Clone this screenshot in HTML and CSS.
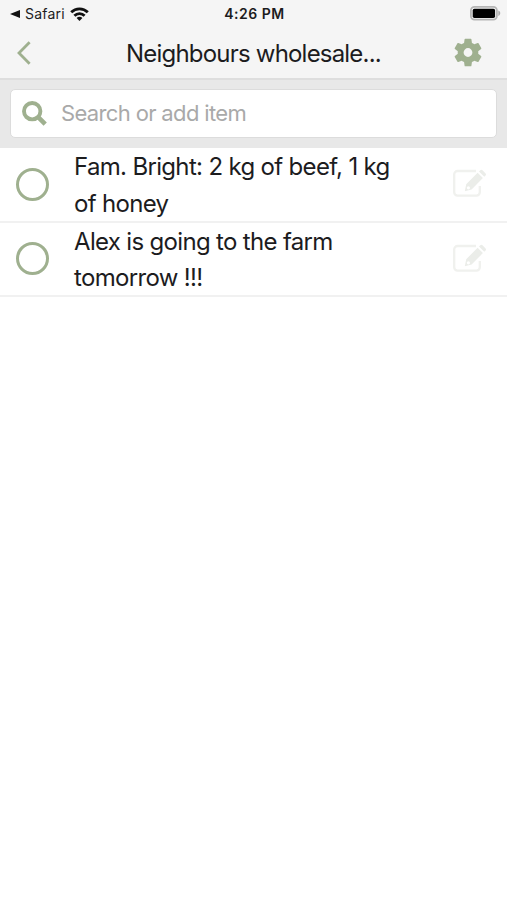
FILE: index.html
```html
<!DOCTYPE html>
<html lang="en">
<head>
<meta charset="UTF-8">
<meta name="viewport" content="width=device-width, initial-scale=1">
<title>Neighbours wholesale</title>
<link rel="stylesheet" href="styles.css">
</head>

<body>

<header class="header">
    <div class="statusbar">
        <div class="status-left">
            <svg class="back-app" viewBox="0 0 10 8"><path d="M0 4 10 0v8z" fill="#111"/></svg>
            <span class="app-name">Safari</span>
            <svg class="wifi" viewBox="0 0 19 14" fill="none" stroke="#111" stroke-width="2.8">
                <path d="M1.2 5.2a11.8 11.8 0 0 1 16.6 0"/>
                <path d="M4.4 8.8a7.2 7.2 0 0 1 10.2 0"/>
                <path d="M9.5 13.9 6.6 11a4 4 0 0 1 5.8 0z" fill="#111" stroke="none"/>
            </svg>
        </div>
        <div class="time">4:26 PM</div>
        <svg class="battery" viewBox="0 0 31 15">
            <rect x=".9" y=".9" width="26" height="12.8" rx="3.6" fill="#f5f5f5" stroke="#b5b5b5" stroke-width="1.8"/>
            <rect x="2.7" y="2.7" width="22.4" height="9.2" rx="1.7" fill="#000"/>
            <path d="M28.3 4.6c2.600.8 2.600 4.600 0 5.400z" fill="#aaa"/>
        </svg>
    </div>

    <div class="navbar">
        <button class="back" aria-label="Back">
            <svg viewBox="0 0 14 24"><path d="M12.6 1.2 2 12l10.6 10.8" fill="none" stroke="#9fb08f" stroke-width="2.8"/></svg>
        </button>
        <h1>Neighbours wholesale...</h1>
        <button class="settings" aria-label="Settings">
            <svg viewBox="1.8 1.8 20.4 20.4"><path fill="#9fb08f" d="M19.43 12.98c.04-.32.07-.64.07-.98s-.03-.66-.07-.98l2.11-1.65c.19-.15.24-.42.12-.64l-2-3.46c-.12-.22-.39-.3-.61-.22l-2.49 1c-.52-.4-1.08-.73-1.69-.98l-.38-2.65A.49.49 0 0 0 14 2h-4c-.25 0-.46.18-.49.42l-.38 2.65c-.61.25-1.17.59-1.69.98l-2.49-1c-.23-.09-.49 0-.61.22l-2 3.46c-.13.22-.07.49.12.64l2.11 1.65c-.04.32-.07.65-.07.98s.03.66.07.98l-2.11 1.65c-.19.15-.24.42-.12.64l2 3.46c.12.22.39.3.61.22l2.49-1c.52.4 1.08.73 1.69.98l.38 2.65c.03.24.24.42.49.42h4c.25 0 .46-.18.49-.42l.38-2.65c.61-.25 1.17-.59 1.69-.98l2.49 1c.23.09.49 0 .61-.22l2-3.46c.12-.22.07-.49-.12-.64zM12 15.2a3.2 3.2 0 1 1 0-6.4 3.2 3.2 0 0 1 0 6.4z"/></svg>
        </button>
    </div>
</header>

<div class="searchbar">
    <label class="searchbox">
        <svg viewBox="0 0 25 25" fill="none" stroke="#9fb08f">
            <circle cx="10.2" cy="10.2" r="8.2" stroke-width="3.9"/>
            <path d="m16.2 16.2 7 7" stroke-width="4.6"/>
        </svg>
        <input type="text" placeholder="Search or add item">
    </label>
</div>

<ul class="list">
    <li>
        <span class="check"></span>
        <p>Fam. Bright: 2 kg of beef, 1 kg of honey</p>
        <svg class="edit" viewBox="0 0 34 28">
            <path d="M23 2H4.5A3.3 3.3 0 0 0 1.2 5.3v18a3.3 3.3 0 0 0 3.3 3.3h19a3.3 3.3 0 0 0 3.3-3.3V17" fill="none" stroke="#f0f1ee" stroke-width="2.3"/>
            <path d="M24.6 3.8 29.9 9.100 18.600 20.400 11.800 22.300 13.200 15.200zM26 2.500l1.300-1.200q1.100-.9 2.200 0l3.100 3.100q.9 1.100 0 2.200l-1.300 1.200z" fill="#ebede9"/>
            <circle cx="15.4" cy="18.8" r="1.6" fill="#fff"/>
        </svg>
    </li>
    <li>
        <span class="check"></span>
        <p>Alex is going to the farm tomorrow !!!</p>
        <svg class="edit" viewBox="0 0 34 28">
            <path d="M23 2H4.5A3.3 3.3 0 0 0 1.2 5.3v18a3.3 3.3 0 0 0 3.3 3.3h19a3.3 3.3 0 0 0 3.3-3.3V17" fill="none" stroke="#f0f1ee" stroke-width="2.3"/>
            <path d="M24.6 3.8 29.9 9.100 18.600 20.400 11.800 22.300 13.200 15.200zM26 2.500l1.300-1.200q1.100-.9 2.200 0l3.100 3.100q.9 1.100 0 2.200l-1.300 1.200z" fill="#ebede9"/>
            <circle cx="15.4" cy="18.8" r="1.6" fill="#fff"/>
        </svg>
    </li>
</ul>

</body>
</html>
```
FILE: styles.css
```css
*{
    box-sizing:border-box;
}

body{
    margin:0;
    font-family:Inter, "Liberation Sans", sans-serif;
    background:#fff;
    color:#1c1c1e;
}

svg{
    display:block;
}

button{
    background:none;
    border:none;
    padding:0;
    cursor:pointer;
}

.header{
    height:80px;
    background:#f5f5f5;
    border-bottom:2px solid #dedede;
}

.statusbar{
    display:grid;
    grid-template-columns:1fr auto 1fr;
    align-items:center;
    height:27px;
    padding:0 6px 0 10px;
}

.status-left{
    display:flex;
    align-items:center;
}

.back-app{
    width:10px;
    height:8px;
}

.app-name{
    margin-left:5px;
    font-size:14px;
    letter-spacing:0.2px;
}

.wifi{
    width:19px;
    height:14px;
    margin-left:5px;
}

.time{
    margin-right:2px;
    font-size:14px;
    font-weight:600;
    letter-spacing:0.5px;
}

.battery{
    width:31px;
    height:15px;
    justify-self:end;
}

.navbar{
    display:flex;
    align-items:center;
    justify-content:space-between;
    height:51px;
    padding:0 25px 0 17px;
}

.back svg{
    width:14px;
    height:24px;
}

.settings svg{
    width:28px;
    height:29px;
}

.navbar h1{
    margin:1px 0 0 22px;
    font-size:24px;
    font-weight:400;
    letter-spacing:-0.8px;
}

.searchbar{
    height:68px;
    padding:9px 10px 10px;
    background:#e8e8e8;
}

.searchbox{
    display:flex;
    align-items:center;
    height:49px;
    padding:0 11px;
    background:#fff;
    border:1px solid #dcdcdc;
    border-radius:5px;
}

.searchbox svg{
    width:25px;
    height:25px;
}

.searchbox input{
    flex:1;
    margin-left:14px;
    padding:0 0 2px;
    border:none;
    outline:none;
    background:none;
    font:22px Inter, "Liberation Sans", sans-serif;
    letter-spacing:-0.65px;
}

.searchbox input::placeholder{
    color:#a9a9a9;
}

.list{
    list-style:none;
    margin:0;
    padding:0;
}

.list li{
    display:flex;
    align-items:center;
    height:74.5px;
    padding:0 20px 0 16px;
    border-bottom:2px solid #f1f1f1;
}

.check{
    width:33px;
    height:33px;
    border:3px solid #9fb08f;
    border-radius:50%;
}

.list p{
    width:335px;
    margin:0 auto 0 25px;
    padding-top:3px;
    font-size:24px;
    line-height:36.5px;
    letter-spacing:-0.67px;
}

.edit{
    width:34px;
    height:28px;
    margin-bottom:2px;
}
```
